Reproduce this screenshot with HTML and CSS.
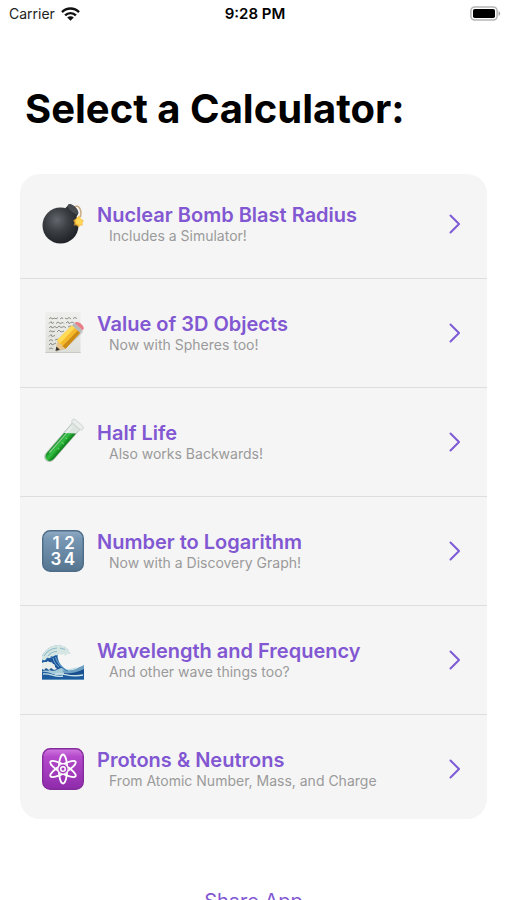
FILE: index.html
```html
<!DOCTYPE html>
<html lang="en">
<head>
<meta charset="utf-8">
<meta name="viewport" content="width=device-width, initial-scale=1">
<title>Select a Calculator</title>
<link rel="stylesheet" href="styles.css">
</head>
<body>
<header class="status">
  <div class="status-left">
    <span>Carrier</span>
    <svg class="wifi" viewBox="0 0 19 14" aria-hidden="true">
      <g fill="none" stroke="#111" stroke-width="2.4">
        <path d="M1 5.2C5.7.3 13.3.3 18 5.2"/>
        <path d="M4.1 8.4c3-3 7.800-3 10.800 0"/>
      </g>
      <path d="M9.500 13.800 6.200 10.500c1.900-1.700 4.700-1.700 6.600 0z" fill="#111"/>
    </svg>
  </div>
  <time class="clock">9:28 PM</time>
  <svg class="battery" viewBox="0 0 31 15" aria-hidden="true">
    <rect x=".9" y=".9" width="26.200" height="13.200" rx="3.800" fill="#fff" stroke="#b5b5b5" stroke-width="1.500"/>
    <rect x="3" y="3" width="22" height="9" rx="1.800" fill="#000"/>
    <path d="M28.500 5.200c2.300.6 2.300 4 0 4.600z" fill="#aaa"/>
  </svg>
</header>

<main class="page">
  <h1 class="heading">Select a Calculator:</h1>

  <ul class="card">
    <li class="item">
      <a class="row" href="#bomb">
        <svg class="icon" viewBox="0 0 42 42" aria-hidden="true">
          <defs>
            <radialGradient id="ball" cx=".4" cy=".35" r=".65">
              <stop offset="0" stop-color="#62676d"/><stop offset=".5" stop-color="#3b3f44"/><stop offset="1" stop-color="#202327"/>
            </radialGradient>
            <radialGradient id="spark"><stop offset="0" stop-color="#fff6a0"/><stop offset=".5" stop-color="#ffc93c"/><stop offset="1" stop-color="#f7a428" stop-opacity=".5"/></radialGradient>
          </defs>
          <path d="M32 4c5-3 8 3 6.500 10" fill="none" stroke="#c9ab83" stroke-width="1.500"/>
          <path d="M23 5.500 27 1.200c4 .3 8 4 9.500 8.800l-3 6z" fill="#303338"/>
          <ellipse cx="31" cy="6" rx="6.500" ry="3" transform="rotate(43 31 6)" fill="#484c51"/>
          <circle cx="18.500" cy="22.500" r="18" fill="url(#ball)"/>
          <path d="m37.500 12 1.200 3.500 3.300 2-1.500 2.500.5 2.500-3 .2-1.500 2-1.700-2.200-3.200.2.700-3-1.200-2.500 3-1.700z" fill="url(#spark)"/>
          <circle cx="37" cy="18.500" r="3" fill="#ffd956"/>
        </svg>
        <span class="text"><span class="title">Nuclear Bomb Blast Radius</span><span class="sub">Includes a Simulator!</span></span>
        <svg class="chevron" viewBox="0 0 12 20" aria-hidden="true"><path d="m1.500 1.500 8.500 8.500-8.500 8.500"/></svg>
      </a>
    </li>
    <li class="item">
      <a class="row" href="#objects">
        <svg class="icon" viewBox="0 0 42 42" aria-hidden="true">
          <defs><linearGradient id="paper" x2="0" y2="1"><stop stop-color="#efefed"/><stop offset="1" stop-color="#deded9"/></linearGradient></defs>
          <rect x="3.500" y="0" width="35" height="41" fill="url(#paper)"/>
          <path d="M3.500 40.500h35" stroke="#c9c9c5"/>
          <g fill="none" stroke="#777773" stroke-width=".8">
            <path d="m7 7 2-1.500 1 1.500 3-1 1 1 2-1.500M18 7l2-1.500 1 1.500M23 6l2 1 2-1.500 2 1.500M31 6.500l2-1 2 1"/>
            <path d="m7 11.500 2-2 1 2 2-1M14 11.500l2-1.500 2 1.500 3-1 1 1M24 11l2-1.500 1 2 3-1.500 2 1"/>
            <path d="m7 16 2-2 1 2 3-1.500 2 1.500 2-2 2 1.500 3-1 2 1.500M26 15l2-1 2 1"/>
            <path d="m7 20 2-1.500 1 1.500 3-1M15 20l2-2 2 2 3-1"/>
            <path d="m7 24.500 2-2 1 2 3-1M7 29l2-1.500 2 1.500M13 28l3-1M7 33l2-2 1 2 4-2M7 37l2-1 2 1"/>
          </g>
          <path d="m14 40 3-10.500L33.500 13l8 7L23 37z" fill="#00000022"/>
          <path d="m13.500 39 2-10.500 8 8z" fill="#e8c58c"/>
          <path d="m13.500 39 .9-4.400 3.500 3.200z" fill="#34312e"/>
          <path d="M14.800 28.500 30 13.300l8.200 7.500L23.300 37c-.6-1.700-1.500-2.400-3-2.500-.1-1.700-1-2.600-2.700-2.700-.2-1.600-1-2.900-2.800-3.300z" fill="#f4b92b"/>
          <path d="M14.800 28.500 30 13.300l2.800 2.600-15.200 15.900c-.2-1.600-1-2.900-2.800-3.300z" fill="#ffda57"/>
          <path d="m23.300 37 14.900-16.200-2.400-2.200-15.500 15.900c1.500.1 2.400.8 3 2.500z" fill="#cc8a16"/>
          <path d="m30 13.300 2.500-2.300 8 7.300-2.300 2.500z" fill="#b6b9b9"/>
          <path d="m32.500 11 1.200-.8c3-1.600 9.300 4 7.800 7l-1 1.100z" fill="#e87e86"/>
        </svg>
        <span class="text"><span class="title">Value of 3D Objects</span><span class="sub">Now with Spheres too!</span></span>
        <svg class="chevron" viewBox="0 0 12 20" aria-hidden="true"><path d="m1.500 1.500 8.500 8.500-8.500 8.500"/></svg>
      </a>
    </li>
    <li class="item">
      <a class="row" href="#half-life">
        <svg class="icon" viewBox="0 0 42 42" aria-hidden="true">
          <defs><linearGradient id="liquid"><stop stop-color="#138b22"/><stop offset=".45" stop-color="#35c044"/><stop offset="1" stop-color="#087816"/></linearGradient></defs>
          <g transform="rotate(41 21 21)">
            <path d="M15.500 0h10v40.500a5 5.500 0 0 1-10 0z" fill="#dce5df" stroke="#adb9b1" stroke-width=".7"/>
            <path d="M16 13.500 25.200 6v34a4.600 5.200 0 0 1-9.200 0z" fill="url(#liquid)"/>
            <path d="M17.800 3v35" stroke="#fff" stroke-opacity=".45" stroke-width="1.300"/>
            <rect x="13.500" y="-4" width="14" height="4.500" rx="2.200" fill="#e9edeb" stroke="#c4cac6" stroke-width=".7"/>
            <path d="M20 22h3M21 29h2M20 16h2" stroke="#66d66c" stroke-width="1"/>
          </g>
        </svg>
        <span class="text"><span class="title">Half Life</span><span class="sub">Also works Backwards!</span></span>
        <svg class="chevron" viewBox="0 0 12 20" aria-hidden="true"><path d="m1.500 1.500 8.500 8.500-8.500 8.500"/></svg>
      </a>
    </li>
    <li class="item">
      <a class="row" href="#logarithm">
        <svg class="icon" viewBox="0 0 42 42" aria-hidden="true">
          <defs><linearGradient id="slate" x2="0" y2="1"><stop stop-color="#91abc3"/><stop offset=".2" stop-color="#7797b4"/><stop offset="1" stop-color="#54748f"/></linearGradient></defs>
          <rect x=".7" y=".7" width="40.600" height="40.600" rx="7.500" fill="url(#slate)" stroke="#4d6c87" stroke-width="1.400"/>
          <g class="digits"><text x="14" y="19">1</text><text x="27.500" y="19">2</text><text x="14" y="35">3</text><text x="27.500" y="35">4</text></g>
        </svg>
        <span class="text"><span class="title">Number to Logarithm</span><span class="sub">Now with a Discovery Graph!</span></span>
        <svg class="chevron" viewBox="0 0 12 20" aria-hidden="true"><path d="m1.500 1.500 8.500 8.500-8.500 8.500"/></svg>
      </a>
    </li>
    <li class="item">
      <a class="row" href="#wave">
        <svg class="icon" viewBox="0 0 42 42" aria-hidden="true">
          <path d="M0 17C3 11 8 7 15 6.500c6-.5 10 2 12 7l-6-1c-4 0-6 3-5 7 1 5 4 8 8 11l6 1 12-5v14.500H0z" fill="#3f86bd"/>
          <path d="M0 17C3 11 8 7 14 6.500l3-.8 2 1 3 .3 2 2 3 1.500v2l2 1.500-2 1.500-2-1-1 2.500-3-2-2 1-2-1.500-2 2-2-.5-1 2-3-1-1 2.500-3-1-2 3-3-1z" fill="#d5e6e3"/>
          <path d="M2 17c3-5 7-7.500 13-8M6 17c2-3 5-4.500 9-4.500M18 9l5 1.500" fill="none" stroke="#93bccb" stroke-width="1.200"/>
          <path d="M0 22c3 0 4-1 6-3 3 1 4-1 6-2l3-.5c0 6 3 11 8 15L0 34z" fill="#20579a"/>
          <path d="M11 19c1 4 3 7 6 9M13.500 18c1 4 3 7 6 10" fill="none" stroke="#78b3d6" stroke-width=".9"/>
          <path d="M0 24c2-2 4 0 6-2 1 2 4 0 5 3 2 0 2 2 2 3l2 2-3 1-3-2-2 2-3-2-2 2-2-1z" fill="#e8efeb"/>
          <path d="M0 33c3-3 5 0 8-2 3 2 6 0 9-1 2-2 4-1 5 1 3 3 9 3 20-2v12H0z" fill="#a5cad8"/>
          <path d="M20 31c6 3 14-1 22-5v5c-7 4-14 5-20 3z" fill="#6c9fc0"/>
          <path d="M22 34c7 1 14-1 20-4v5c-7 2-14 3-20 1z" fill="#194f8f"/>
          <path d="M0 33c7-1 11 4 19 3 8-1 15 2 23-2v6.500H0z" fill="#1c5c9e"/>
          <path d="M1 35c8-1 12 4 20 2M13 35c8-2 14 4 28 1M26 31l9-2" fill="none" stroke="#c8e0e5" stroke-width="1.300"/>
        </svg>
        <span class="text"><span class="title">Wavelength and Frequency</span><span class="sub">And other wave things too?</span></span>
        <svg class="chevron" viewBox="0 0 12 20" aria-hidden="true"><path d="m1.500 1.500 8.500 8.500-8.500 8.500"/></svg>
      </a>
    </li>
    <li class="item">
      <a class="row" href="#protons">
        <svg class="icon" viewBox="0 0 42 42" aria-hidden="true">
          <defs><linearGradient id="violet" x2="0" y2="1"><stop stop-color="#d17ae0"/><stop offset=".2" stop-color="#b449cb"/><stop offset="1" stop-color="#8e2bab"/></linearGradient></defs>
          <rect x=".7" y=".7" width="40.600" height="40.600" rx="7.500" fill="url(#violet)" stroke="#842c9c" stroke-width="1.400"/>
          <g fill="none" stroke="#fff" stroke-width="1.800">
            <ellipse cx="21" cy="21" rx="4.200" ry="14.500"/>
            <ellipse cx="21" cy="21" rx="4.200" ry="14.500" transform="rotate(60 21 21)"/>
            <ellipse cx="21" cy="21" rx="4.200" ry="14.500" transform="rotate(120 21 21)"/>
          </g>
          <circle cx="21" cy="21" r="5" fill="#a43abc"/>
          <circle cx="21" cy="21" r="2.300" fill="#a43abc" stroke="#fff" stroke-width="1.500"/>
          <circle cx="21" cy="21" r="5" fill="none" stroke="#fff" stroke-width="1.200" stroke-opacity=".75"/>
        </svg>
        <span class="text"><span class="title">Protons &amp; Neutrons</span><span class="sub">From Atomic Number, Mass, and Charge</span></span>
        <svg class="chevron" viewBox="0 0 12 20" aria-hidden="true"><path d="m1.500 1.500 8.500 8.500-8.500 8.500"/></svg>
      </a>
    </li>
  </ul>

  <button class="share" type="button">Share App</button>
</main>
</body>
</html>
```
FILE: styles.css
```css
* {
  box-sizing: border-box;
}

body {
  margin: 0;
  height: 100vh;
  overflow: hidden;
  background: #fff;
  color: #000;
  font-family: Inter, "Liberation Sans", sans-serif;
}

.status {
  display: grid;
  grid-template-columns: 1fr auto 1fr;
  align-items: center;
  height: 27px;
  padding: 0 6px 0 9px;
  font-size: 14px;
}

.status-left {
  display: flex;
  align-items: center;
  gap: 6px;
  color: #222;
}

.wifi {
  width: 19px;
  height: 14px;
}

.clock {
  font-size: 15px;
  font-weight: 600;
}

.battery {
  width: 31px;
  height: 15px;
  justify-self: end;
}

.page {
  display: flex;
  flex-direction: column;
  padding: 57px 20px 0;
}

.heading {
  margin: 0 0 40px;
  padding: 0 5px;
  font-size: 40px;
  line-height: 50px;
  font-weight: 700;
}

.card {
  margin: 0;
  padding: 0;
  list-style: none;
  background: #f5f5f5;
  border-radius: 20px;
  overflow: hidden;
}

.item {
  padding: 33px 26px 33px 22px;
  border-bottom: 1px solid #dedede;
}

.item:first-child {
  padding-top: 29px;
}

.item:last-child {
  padding-bottom: 29px;
  border-bottom: 0;
}

.row {
  display: flex;
  align-items: center;
  gap: 13px;
  color: #8257d2;
  text-decoration: none;
}

.icon {
  flex: none;
  width: 42px;
  height: 42px;
  overflow: visible;
}

.digits {
  fill: #fff;
  font-size: 17px;
  font-weight: 600;
  text-anchor: middle;
}

.text {
  display: flex;
  flex: 1;
  flex-direction: column;
}

.title {
  font-size: 20px;
  line-height: 24px;
  font-weight: 600;
}

.sub {
  padding-left: 12px;
  color: #9a9a9a;
  font-size: 14px;
  line-height: 18px;
}

.chevron {
  flex: none;
  width: 12px;
  height: 20px;
  fill: none;
  stroke: #7d5bd6;
  stroke-width: 2;
  stroke-linecap: round;
  stroke-linejoin: round;
}

.share {
  align-self: center;
  margin-top: 70px;
  padding: 0;
  border: 0;
  background: none;
  color: #8257d2;
  font: inherit;
  font-size: 20px;
  line-height: 24px;
}
```
